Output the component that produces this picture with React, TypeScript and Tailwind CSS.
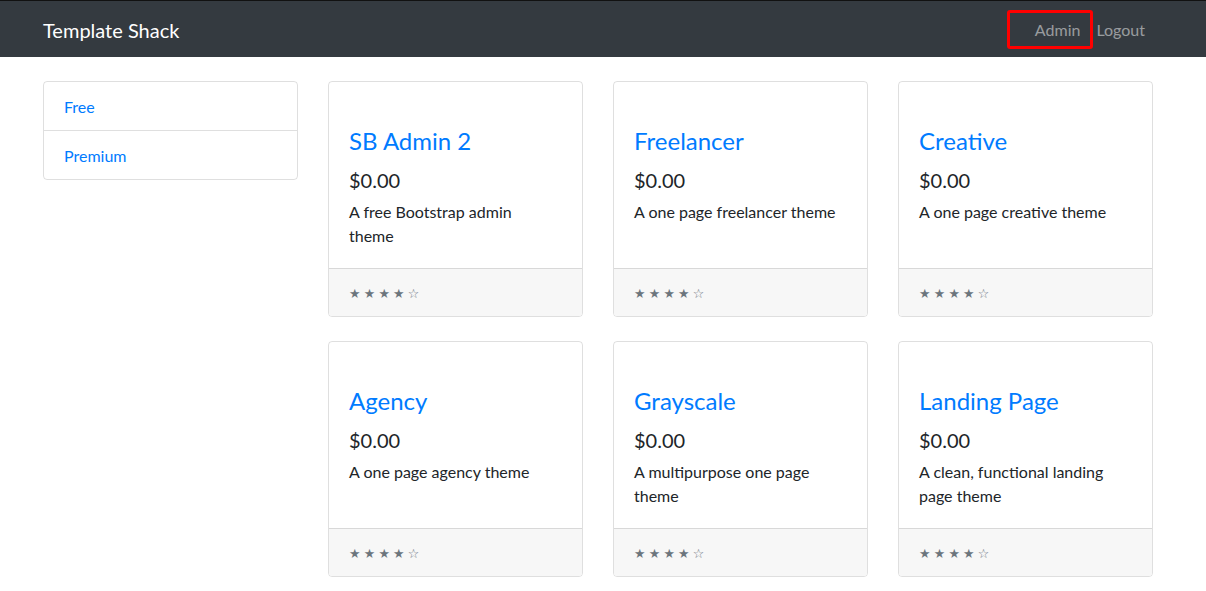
import React from "react";

const items = [
  { t: "SB Admin 2", d: ["A free Bootstrap admin", "theme"] },
  { t: "Freelancer", d: ["A one page freelancer theme"] },
  { t: "Creative", d: ["A one page creative theme"] },
  { t: "Agency", d: ["A one page agency theme"] },
  { t: "Grayscale", d: ["A multipurpose one page", "theme"] },
  { t: "Landing Page", d: ["A clean, functional landing", "page theme"] },
];

function Stars() {
  const s = ["★", "★", "★", "★", "☆"];
  return (
    <div className="flex text-[12.8px] leading-[24px] text-[#6c757d]" style={{ fontFamily: '"DejaVu Sans", sans-serif' }}>
      {s.map((c, i) => (
        <span key={i} className="w-[14.7px] inline-block">
          {c}
        </span>
      ))}
    </div>
  );
}

export default function App() {
  return (
    <div
      className="min-h-[591px] bg-white text-[#212529] text-[16px] leading-[24px]"
      style={{ fontFamily: 'Lato, "Open Sans", sans-serif' }}
    >
      <nav className="h-[57px] bg-[#343a40] border-t border-[#111]">
        <div className="ml-[28px] w-[1140px] px-[15px] pt-[2px] h-full flex items-center justify-between">
          <span className="text-white text-[20px] leading-[30px] whitespace-nowrap">Template Shack</span>
          <div className="flex items-center text-[16px] leading-[24px] text-[rgba(255,255,255,0.5)]">
            <span className="px-[8px] py-[8px] relative">
              Admin
              <span className="absolute left-[-20px] right-[-5px] top-[0px] bottom-[1px] border-[3px] border-[#ff0000] rounded-[3px]" />
            </span>
            <span className="px-[8px] py-[8px]">Logout</span>
          </div>
        </div>
      </nav>
      <div className="ml-[28px] w-[1140px] mt-[24px] flex">
        <div className="w-[285px] px-[15px]">
          <div className="border border-[rgba(0,0,0,0.125)] rounded-[4px] text-[#007bff]">
            <div className="px-[20px] pt-[13px] pb-[11px]">Free</div>
            <div className="px-[20px] pt-[13px] pb-[11px] border-t border-[rgba(0,0,0,0.125)]">Premium</div>
          </div>
        </div>
        <div className="w-[855px] grid grid-cols-3">
          {items.map((it) => (
            <div key={it.t} className="px-[15px] mb-[24px]">
              <div className="h-full flex flex-col border border-[rgba(0,0,0,0.125)] rounded-[4px] overflow-hidden">
                <div className="flex-1 px-[20px] pt-[45px] pb-[20px]">
                  <div className="text-[24px] leading-[28.8px] text-[#007bff] mb-[12px] whitespace-nowrap">{it.t}</div>
                  <div className="text-[20px] leading-[24px] mb-[8px]">$0.00</div>
                  <div className="whitespace-nowrap">
                    {it.d.map((l, i) => (
                      <div key={i}>{l}</div>
                    ))}
                  </div>
                </div>
                <div className="bg-[#f7f7f7] border-t border-[rgba(0,0,0,0.125)] px-[20px] pt-[13px] h-[48px]">
                  <Stars />
                </div>
              </div>
            </div>
          ))}
        </div>
      </div>
    </div>
  );
}
